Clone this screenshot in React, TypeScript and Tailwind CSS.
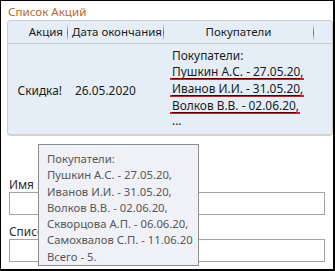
import * as React from "react";

const buyers = [
  "Пушкин А.С. - 27.05.20",
  "Иванов И.И. - 31.05.20",
  "Волков В.В. - 02.06.20",
];

const tooltipLines = [
  "Покупатели:",
  "Пушкин А.С. - 27.05.20,",
  "Иванов И.И. - 31.05.20,",
  "Волков В.В. - 02.06.20,",
  "Скворцова А.П. - 06.06.20,",
  "Самохвалов С.П. - 11.06.20",
  "Всего - 5.",
];

const HeaderSep = () => (
  <div className="w-px h-[17px] shrink-0 bg-gradient-to-b from-[#e5eef7] via-[#6e6e6e] to-[#e5eef7]" />
);

export default function App() {
  return (
    <div className="relative w-[335px] h-[271px] overflow-hidden bg-white border-l border-t border-r-2 border-b-2 border-black font-['Noto_Sans',sans-serif] text-[11.9px] text-[#1b1b1b] whitespace-nowrap">
      <div className="pl-[7px] pt-[3px] h-[19px] leading-[16px] text-[11.6px] text-[#b8692a]">
        Список Акций
      </div>

      {/* таблица акций */}
      <div className="ml-[6px] h-[116px] rounded-[4px] border border-[#cbcbcb] border-b-2 border-b-[#d2d2d2] bg-[#e5eef7] overflow-hidden">
        <div className="flex items-center h-[23px] border-b border-[#cbcbcb] text-[11.5px]">
          <div className="w-[59px] pr-[4px] text-right">Акция</div>
          <HeaderSep />
          <div className="w-[95px] pl-[4px]">Дата окончания</div>
          <HeaderSep />
          <div className="w-[149px] text-center">Покупатели</div>
          <HeaderSep />
        </div>
        <div className="flex h-[91px]">
          <div className="w-[60px] pr-[6px] pt-[38px] text-right">Скидка!</div>
          <div className="w-[96px] pl-[7px] pt-[38px]">26.05.2020</div>
          <div className="pl-[8px] pt-[3px] leading-[16px]">
            <div>Покупатели:</div>
            {buyers.map((b) => (
              <div key={b}>
                <span className="inline-block -ml-[2px] pl-[2px] pr-[1px] border-b-2 border-[#e8141c] leading-[14px]">
                  <span className="underline underline-offset-[2px]">{b}</span>,
                </span>
              </div>
            ))}
            <div className="leading-[12px]">...</div>
          </div>
        </div>
      </div>

      {/* форма */}
      <div className="px-[8px] pt-[40px]">
        <div className="leading-[16px] text-[#2b2b2b]">Имя владельца</div>
        <div className="h-[23px] border border-[#a3a3a3] bg-white" />
        <div className="mt-[8px] leading-[16px] text-[#2b2b2b]">Список покупателей</div>
        <div className="h-[23px] border border-[#a3a3a3] bg-white" />
      </div>

      {/* подсказка */}
      <div className="absolute left-[37px] top-[143px] w-[161px] h-[122px] overflow-hidden border border-[#8c8c8c] bg-[#f0f1f6] pl-[8px] pt-[6px] text-[11.3px] text-[#575757] leading-[16.3px]">
        {tooltipLines.map((l) => (
          <div key={l}>{l}</div>
        ))}
      </div>
    </div>
  );
}
